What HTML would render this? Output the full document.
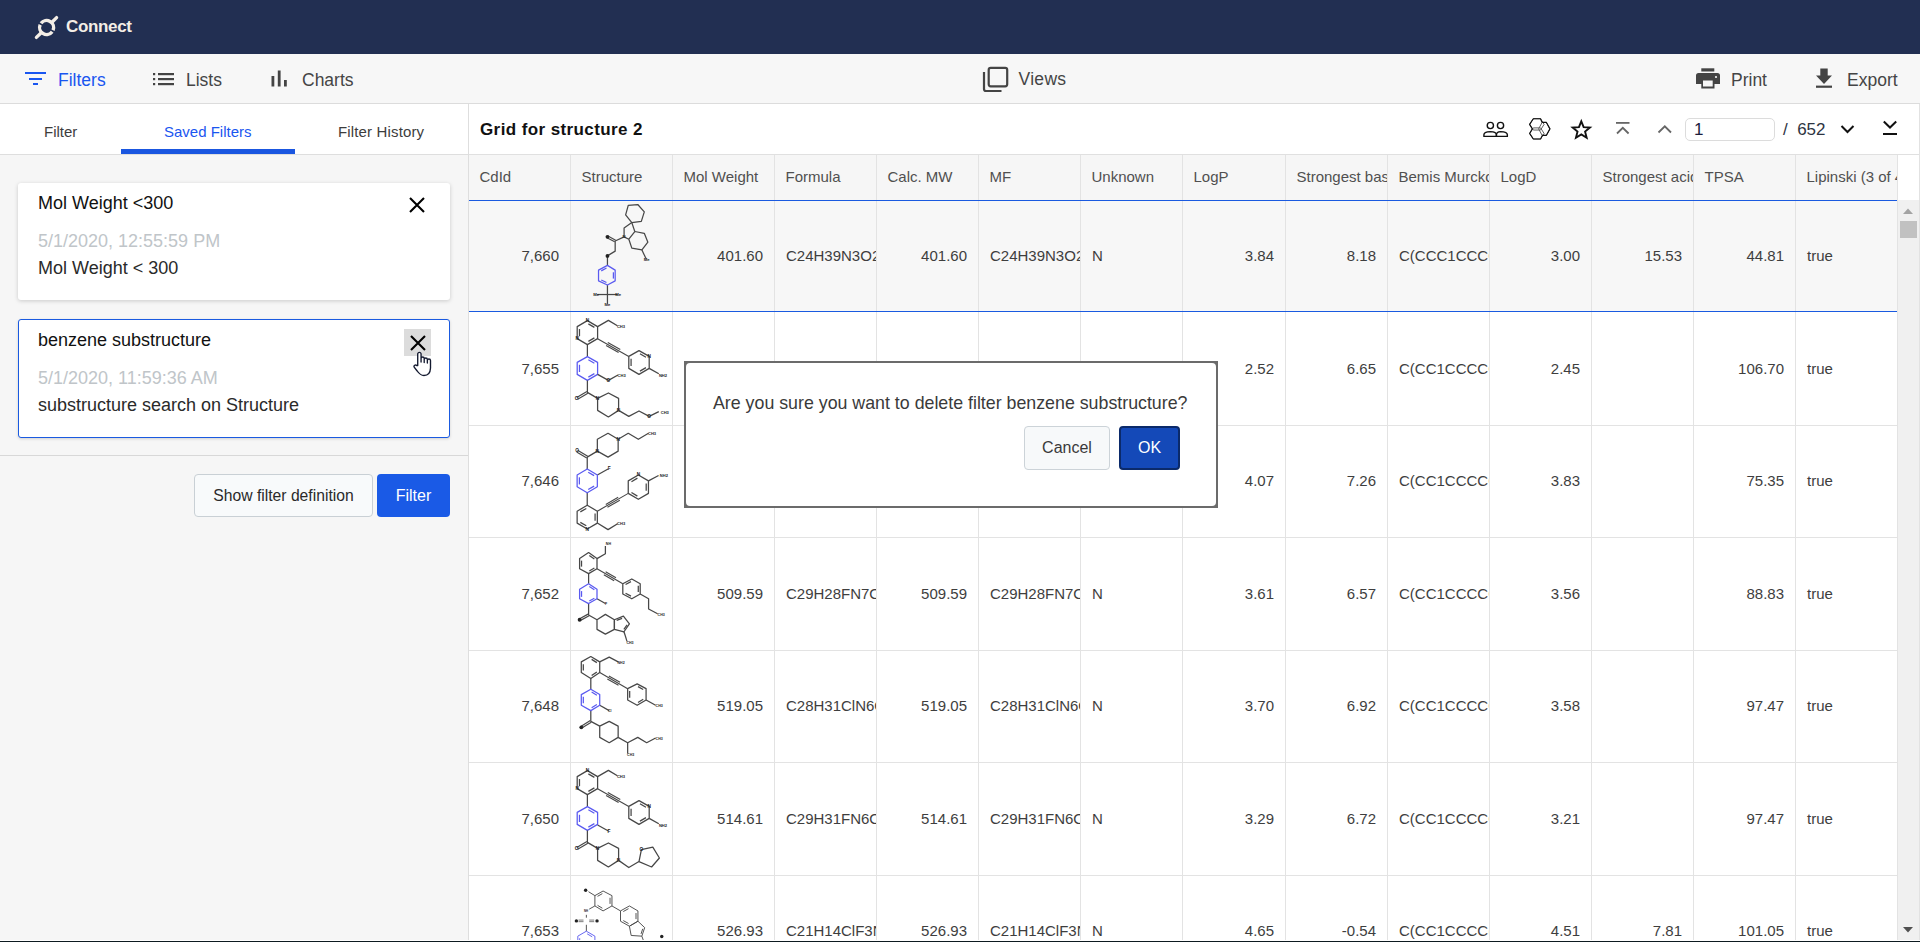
<!DOCTYPE html>
<html><head><meta charset="utf-8">
<style>
*{box-sizing:border-box;margin:0;padding:0}
html,body{width:1920px;height:942px;overflow:hidden;background:#fff;font-family:"Liberation Sans", sans-serif;color:#444}
.abs{position:absolute}
#hdr{position:absolute;left:0;top:0;width:1920px;height:54px;background:#222f52}
#tb{position:absolute;left:0;top:54px;width:1920px;height:50px;background:#f7f7f7;border-bottom:1px solid #dcdcdc}
.tbl{position:absolute;font-size:17.5px;line-height:20px;color:#454545;white-space:nowrap}
#left{position:absolute;left:0;top:104px;width:468px;height:838px;background:#f6f6f6}
#tabs{position:absolute;left:0;top:0;width:468px;height:51px;background:#fff;border-bottom:1px solid #dedede}
.tab{position:absolute;top:19px;font-size:15px;line-height:18px;color:#3d3d3d;white-space:nowrap}
.card{position:absolute;left:18px;width:431.5px;height:118px;background:#fff;border-radius:3px;box-shadow:0 1px 4px rgba(0,0,0,0.18)}
.ct{position:absolute;left:20px;font-size:18px;line-height:20px;color:#111;white-space:nowrap}
.cd{position:absolute;left:20px;font-size:18px;line-height:20px;color:#c0c5c9;white-space:nowrap}
.cs{position:absolute;left:20px;font-size:18px;line-height:20px;color:#2a2a2a;white-space:nowrap}
#vdiv{position:absolute;left:468px;top:104px;width:1px;height:838px;background:#dedede}
#gt{position:absolute;left:480px;top:119.5px;font-size:17px;font-weight:bold;line-height:20px;color:#111;letter-spacing:0.4px;white-space:nowrap}
#hrow{position:absolute;left:469px;top:154px;width:1428px;height:46px;background:#f6f6f6;border-top:1px solid #e0e0e0}
#hline{position:absolute;left:469px;top:154px;width:1451px;height:1px;background:#e0e0e0}
.hc{position:absolute;top:168px;width:102px;padding-left:10.5px;font-size:15px;line-height:18px;color:#505050;white-space:nowrap;overflow:hidden}
.c{position:absolute;width:101px;height:112px;font-size:15px;line-height:112px;color:#3e3e3e;white-space:nowrap;overflow:hidden}
.cr{text-align:right;padding-right:11px}
.cl{text-align:left;padding-left:11px}
.vl{position:absolute;top:155px;width:1px;height:787px;background:#e3e3e3}
.hl{position:absolute;left:469px;width:1428px;height:1px;background:#e3e3e3}
.mol{position:absolute}
#sel{position:absolute;left:469px;top:200px;width:1428px;height:112px;background:#f7f7f7}
.bl{position:absolute;left:469px;width:1428px;height:1px;background:#1a5ae0}
#sb{position:absolute;left:1898px;top:200px;width:22px;height:742px;background:#f0f0f0}
#dlg{position:absolute;left:684px;top:361px;width:534px;height:147px;background:#6b6b6b;padding:2px}
#dlgi{position:relative;width:100%;height:100%;background:#fff;border-radius:4px}
.btn{position:absolute;border-radius:4px;font-size:16px;text-align:center;white-space:nowrap}
</style></head><body>
<div id="hdr">
  <svg class="abs" style="left:33px;top:14px" width="28" height="28" viewBox="0 0 28 28">
    <path d="M19.19,17.71 A7.0,7.0 0 0 1 7.16,10.76 M8.01,9.29 A7.0,7.0 0 0 1 20.04,16.24" fill="none" stroke="#f4eee6" stroke-width="3.4"/>
    <line x1="19.2" y1="8" x2="23.6" y2="3.6" stroke="#f4eee6" stroke-width="3.3" stroke-linecap="round"/>
    <line x1="8" y1="19" x2="3.4" y2="23.4" stroke="#f4eee6" stroke-width="3.3" stroke-linecap="round"/>
  </svg>
  <div class="abs" style="left:66px;top:17px;font-size:17px;line-height:20px;font-weight:bold;letter-spacing:-0.35px;color:#f4eee6">Connect</div>
</div>
<div id="tb">
  <svg class="abs" style="left:25px;top:17px" width="22" height="16" viewBox="0 0 22 16"><rect x="0" y="1" width="21" height="2" fill="#1a56f0"/><rect x="4" y="7" width="13" height="2" fill="#1a56f0"/><rect x="8" y="12" width="5" height="2" fill="#1a56f0"/></svg>
  <div class="tbl" style="left:58px;top:16px;color:#1a56f0">Filters</div>
  <svg class="abs" style="left:153px;top:19px" width="22" height="13" viewBox="0 0 22 13"><rect x="0" y="0" width="2.2" height="2.2" fill="#444"/><rect x="0" y="5" width="2.2" height="2.2" fill="#444"/><rect x="0" y="10" width="2.2" height="2.2" fill="#444"/><rect x="5" y="0" width="16" height="2.2" fill="#444"/><rect x="5" y="5" width="16" height="2.2" fill="#444"/><rect x="5" y="10" width="16" height="2.2" fill="#444"/></svg>
  <div class="tbl" style="left:186px;top:16px">Lists</div>
  <svg class="abs" style="left:271px;top:16px" width="18" height="18" viewBox="0 0 18 18"><rect x="0.5" y="6" width="2.8" height="10.5" fill="#444"/><rect x="6.8" y="0.5" width="2.8" height="16" fill="#444"/><rect x="13" y="10" width="2.8" height="6.5" fill="#444"/></svg>
  <div class="tbl" style="left:302px;top:16px">Charts</div>
  <svg class="abs" style="left:982px;top:12px" width="27" height="27" viewBox="0 0 27 27"><path d="M2,6 V23 a2,2 0 0 0 2,2 H19.5" fill="none" stroke="#444" stroke-width="2.2"/><rect x="6.7" y="1.8" width="18.5" height="18.5" rx="2" fill="none" stroke="#444" stroke-width="2.2"/></svg>
  <div class="tbl" style="left:1018.5px;top:15px;letter-spacing:0.3px">Views</div>
  <svg class="abs" style="left:1696px;top:14px" width="24" height="22" viewBox="0 0 24 22"><rect x="5.3" y="0.3" width="13" height="3.2" fill="#444"/><path d="M2.5,5 H21.5 a2.5,2.5 0 0 1 2.5,2.5 V16 H18.5 V20.5 H5.3 V16 H0 V7.5 a2.5,2.5 0 0 1 2.5,-2.5 Z M7,12.5 V18.5 H16.7 V12.5 Z" fill="#444" fill-rule="evenodd"/><circle cx="20" cy="9" r="1.1" fill="#f7f7f7"/></svg>
  <div class="tbl" style="left:1731px;top:16px">Print</div>
  <svg class="abs" style="left:1815px;top:14px" width="18" height="21" viewBox="0 0 18 21"><path d="M5.3,0.5 H12.7 V7.5 H17 L9,16 L1,7.5 H5.3 Z" fill="#444"/><rect x="1" y="17.6" width="16" height="2.2" fill="#444"/></svg>
  <div class="tbl" style="left:1847px;top:16px">Export</div>
</div>
<div id="left">
  <div id="tabs">
    <div class="tab" style="left:44px">Filter</div>
    <div class="tab" style="left:164px;color:#1a56f0">Saved Filters</div>
    <div class="tab" style="left:338px;letter-spacing:0.15px">Filter History</div>
    <div class="abs" style="left:121px;top:45px;width:174px;height:5px;background:#1a56e0"></div>
  </div>
  <div class="card" style="top:79px;height:117px">
    <div class="ct" style="top:10px">Mol Weight &lt;300</div>
    <svg class="abs" style="left:391px;top:14px" width="16" height="16" viewBox="0 0 16 16"><path d="M1,1 L15,15 M15,1 L1,15" stroke="#000" stroke-width="2.1"/></svg>
    <div class="cd" style="top:48px">5/1/2020, 12:55:59 PM</div>
    <div class="cs" style="top:75px">Mol Weight &lt; 300</div>
  </div>
  <div class="card" style="top:215px;height:119px;border:1px solid #1a5ae0;box-shadow:0 1px 3px rgba(0,0,0,0.15)">
    <div class="ct" style="top:10px;left:19px">benzene substructure</div>
    <div class="abs" style="left:385px;top:9px;width:27px;height:27px;background:#dcdcdc"></div>
    <svg class="abs" style="left:391px;top:15px" width="16" height="16" viewBox="0 0 16 16"><path d="M1,1 L15,15 M15,1 L1,15" stroke="#000" stroke-width="2.1"/></svg>
    <div class="cd" style="top:48px;left:19px">5/1/2020, 11:59:36 AM</div>
    <div class="cs" style="top:75px;left:19px">substructure search on Structure</div>
  </div>
  <div class="abs" style="left:0;top:351px;width:468px;height:1px;background:#d8d8d8"></div>
  <div class="btn" style="left:194px;top:370px;width:179px;height:43px;background:#f8fafb;border:1px solid #c9d0d5;color:#2a2a2a;font-size:15.7px;line-height:41px">Show filter definition</div>
  <div class="btn" style="left:377px;top:370px;width:73px;height:43px;background:#1a5ae6;color:#fff;line-height:43px">Filter</div>
</div>
<div id="vdiv"></div>
<div id="gt">Grid for structure 2</div>
<div id="hrow"></div><div id="hline"></div>
<div id="sel"></div>
<svg class="mol" style="left:570px;top:200px" width="102" height="112" viewBox="0 0 858 942" preserveAspectRatio="none"><path d="M490,45 L570,38 L625,100 L600,180 L520,190 L468,125 Z" fill="none" stroke="#474747" stroke-width="10.5" stroke-linejoin="round"/><path d="M545,265 L625,280 L655,355 L605,420 L520,405 L495,330 Z" fill="none" stroke="#474747" stroke-width="10.5" stroke-linejoin="round"/><path d="M520,190 L455,235 L455,310" fill="none" stroke="#474747" stroke-width="10.5" stroke-linejoin="round"/><path d="M520,190 L545,265" fill="none" stroke="#474747" stroke-width="10.5" stroke-linejoin="round"/><path d="M495,330 L455,310" fill="none" stroke="#474747" stroke-width="10.5" stroke-linejoin="round"/><path d="M455,310 L380,345 L380,430 L315,470 L315,550" fill="none" stroke="#474747" stroke-width="10.5" stroke-linejoin="round"/><path d="M605,420 L640,495" fill="none" stroke="#474747" stroke-width="10.5" stroke-linejoin="round"/><path d="M315,715 L315,870" fill="none" stroke="#474747" stroke-width="10.5" stroke-linejoin="round"/><path d="M230,795 L400,795" fill="none" stroke="#474747" stroke-width="10.5" stroke-linejoin="round"/><line x1="384" y1="338" x2="319" y2="303" stroke="#474747" stroke-width="10"/><line x1="376" y1="352" x2="311" y2="317" stroke="#474747" stroke-width="10"/><path d="M315,550 L380,590 L380,680 L315,715 L240,680 L240,590 Z" fill="none" stroke="#5a5af0" stroke-width="10.5" stroke-linejoin="round"/><line x1="365" y1="608" x2="365" y2="661" stroke="#5a5af0" stroke-width="10.5"/><line x1="307" y1="694" x2="263" y2="673" stroke="#5a5af0" stroke-width="10.5"/><line x1="263" y1="596" x2="307" y2="572" stroke="#5a5af0" stroke-width="10.5"/><circle cx="315" cy="310" r="16" fill="#222"/><text x="455" y="312" font-size="36" font-weight="bold" fill="#222" font-family="Liberation Sans" text-anchor="middle" dominant-baseline="middle">N</text><circle cx="315" cy="470" r="16" fill="#222"/><text x="645" y="500" font-size="36" font-weight="bold" fill="#222" font-family="Liberation Sans" text-anchor="middle" dominant-baseline="middle">Me</text><text x="220" y="795" font-size="36" font-weight="bold" fill="#222" font-family="Liberation Sans" text-anchor="middle" dominant-baseline="middle">Me</text><text x="405" y="800" font-size="36" font-weight="bold" fill="#222" font-family="Liberation Sans" text-anchor="middle" dominant-baseline="middle">Me</text><text x="315" y="880" font-size="36" font-weight="bold" fill="#222" font-family="Liberation Sans" text-anchor="middle" dominant-baseline="middle">Me</text></svg><svg class="mol" style="left:570px;top:312px" width="102" height="113" viewBox="0 0 850 942" preserveAspectRatio="none"><path d="M145,72 L230,122 L230,222 L145,272 L60,222 L60,122 Z" fill="none" stroke="#474747" stroke-width="10.5" stroke-linejoin="round"/><line x1="153" y1="99" x2="203" y2="128" stroke="#474747" stroke-width="10.5"/><line x1="203" y1="216" x2="153" y2="245" stroke="#474747" stroke-width="10.5"/><line x1="79" y1="202" x2="79" y2="142" stroke="#474747" stroke-width="10.5"/><path d="M230,122 L320,70 L395,115" fill="none" stroke="#474747" stroke-width="10.5" stroke-linejoin="round"/><line x1="230" y1="222" x2="490" y2="370" stroke="#474747" stroke-width="9.5"/><line x1="301" y1="279" x2="405" y2="338" stroke="#474747" stroke-width="9.5"/><line x1="315" y1="254" x2="419" y2="313" stroke="#474747" stroke-width="9.5"/><path d="M490,370 L575,322 L660,370 L660,470 L575,520 L490,470 Z" fill="none" stroke="#474747" stroke-width="10.5" stroke-linejoin="round"/><line x1="583" y1="348" x2="633" y2="377" stroke="#474747" stroke-width="10.5"/><line x1="633" y1="464" x2="583" y2="493" stroke="#474747" stroke-width="10.5"/><line x1="509" y1="450" x2="509" y2="390" stroke="#474747" stroke-width="10.5"/><path d="M660,470 L740,515" fill="none" stroke="#474747" stroke-width="10.5" stroke-linejoin="round"/><path d="M145,272 L145,372" fill="none" stroke="#474747" stroke-width="10.5" stroke-linejoin="round"/><path d="M145,372 L230,420 L230,520 L145,570 L60,520 L60,420 Z" fill="none" stroke="#5a5af0" stroke-width="10.5" stroke-linejoin="round"/><line x1="153" y1="398" x2="203" y2="427" stroke="#5a5af0" stroke-width="10.5"/><line x1="203" y1="514" x2="153" y2="543" stroke="#5a5af0" stroke-width="10.5"/><line x1="79" y1="500" x2="79" y2="440" stroke="#5a5af0" stroke-width="10.5"/><path d="M145,570 L145,670 L230,720" fill="none" stroke="#474747" stroke-width="10.5" stroke-linejoin="round"/><line x1="141" y1="663" x2="56" y2="713" stroke="#474747" stroke-width="10"/><line x1="149" y1="677" x2="64" y2="727" stroke="#474747" stroke-width="10"/><path d="M230,720 L320,675 L405,720 L405,820 L320,875 L230,820 Z" fill="none" stroke="#474747" stroke-width="10.5" stroke-linejoin="round"/><text x="145" y="70" font-size="40" font-weight="bold" fill="#222" font-family="Liberation Sans" text-anchor="middle" dominant-baseline="middle">N</text><text x="60" y="220" font-size="40" font-weight="bold" fill="#222" font-family="Liberation Sans" text-anchor="middle" dominant-baseline="middle">N</text><text x="425" y="125" font-size="34" font-weight="bold" fill="#222" font-family="Liberation Sans" text-anchor="middle" dominant-baseline="middle">CH3</text><text x="660" y="372" font-size="40" font-weight="bold" fill="#222" font-family="Liberation Sans" text-anchor="middle" dominant-baseline="middle">N</text><text x="775" y="530" font-size="34" font-weight="bold" fill="#222" font-family="Liberation Sans" text-anchor="middle" dominant-baseline="middle">NH2</text><text x="55" y="725" font-size="40" font-weight="bold" fill="#222" font-family="Liberation Sans" text-anchor="middle" dominant-baseline="middle">O</text><text x="230" y="722" font-size="40" font-weight="bold" fill="#222" font-family="Liberation Sans" text-anchor="middle" dominant-baseline="middle">N</text><text x="405" y="822" font-size="40" font-weight="bold" fill="#222" font-family="Liberation Sans" text-anchor="middle" dominant-baseline="middle">N</text><path d="M230,520 L320,570 L400,525" fill="none" stroke="#474747" stroke-width="10.5" stroke-linejoin="round"/><path d="M405,820 L490,870 L575,825 L660,870 L740,830" fill="none" stroke="#474747" stroke-width="10.5" stroke-linejoin="round"/><text x="320" y="572" font-size="40" font-weight="bold" fill="#222" font-family="Liberation Sans" text-anchor="middle" dominant-baseline="middle">O</text><text x="430" y="530" font-size="34" font-weight="bold" fill="#222" font-family="Liberation Sans" text-anchor="middle" dominant-baseline="middle">CH3</text><text x="660" y="872" font-size="40" font-weight="bold" fill="#222" font-family="Liberation Sans" text-anchor="middle" dominant-baseline="middle">O</text><text x="790" y="840" font-size="34" font-weight="bold" fill="#222" font-family="Liberation Sans" text-anchor="middle" dominant-baseline="middle">CH3</text></svg><svg class="mol" style="left:570px;top:425px" width="102" height="112" viewBox="0 0 858 942" preserveAspectRatio="none"><path d="M230,220 L230,120 L320,70 L405,120 L405,220 L320,270 Z" fill="none" stroke="#474747" stroke-width="10.5" stroke-linejoin="round"/><path d="M405,120 L490,70 L575,120 L660,70" fill="none" stroke="#474747" stroke-width="10.5" stroke-linejoin="round"/><path d="M230,220 L145,270 L145,370" fill="none" stroke="#474747" stroke-width="10.5" stroke-linejoin="round"/><path d="M230,420 L320,370" fill="none" stroke="#474747" stroke-width="10.5" stroke-linejoin="round"/><path d="M145,570 L145,675" fill="none" stroke="#474747" stroke-width="10.5" stroke-linejoin="round"/><path d="M660,470 L745,425" fill="none" stroke="#474747" stroke-width="10.5" stroke-linejoin="round"/><path d="M230,825 L320,880 L400,830" fill="none" stroke="#474747" stroke-width="10.5" stroke-linejoin="round"/><line x1="149" y1="263" x2="64" y2="213" stroke="#474747" stroke-width="10"/><line x1="141" y1="277" x2="56" y2="227" stroke="#474747" stroke-width="10"/><path d="M145,370 L230,420 L230,520 L145,570 L60,520 L60,420 Z" fill="none" stroke="#5a5af0" stroke-width="10.5" stroke-linejoin="round"/><line x1="153" y1="397" x2="203" y2="426" stroke="#5a5af0" stroke-width="10.5"/><line x1="203" y1="514" x2="153" y2="543" stroke="#5a5af0" stroke-width="10.5"/><line x1="79" y1="500" x2="79" y2="440" stroke="#5a5af0" stroke-width="10.5"/><path d="M145,675 L230,725 L230,825 L145,875 L60,825 L60,725 Z" fill="none" stroke="#474747" stroke-width="10.5" stroke-linejoin="round"/><line x1="211" y1="745" x2="211" y2="805" stroke="#474747" stroke-width="10.5"/><line x1="137" y1="848" x2="87" y2="819" stroke="#474747" stroke-width="10.5"/><line x1="87" y1="731" x2="137" y2="702" stroke="#474747" stroke-width="10.5"/><line x1="230" y1="725" x2="490" y2="575" stroke="#474747" stroke-width="9.5"/><line x1="315" y1="692" x2="419" y2="632" stroke="#474747" stroke-width="9.5"/><line x1="301" y1="668" x2="405" y2="608" stroke="#474747" stroke-width="9.5"/><path d="M490,575 L490,470 L575,420 L660,470 L660,575 L575,625 Z" fill="none" stroke="#474747" stroke-width="10.5" stroke-linejoin="round"/><line x1="517" y1="477" x2="567" y2="447" stroke="#474747" stroke-width="10.5"/><line x1="641" y1="491" x2="641" y2="554" stroke="#474747" stroke-width="10.5"/><line x1="567" y1="598" x2="517" y2="568" stroke="#474747" stroke-width="10.5"/><text x="690" y="72" font-size="34" font-weight="bold" fill="#222" font-family="Liberation Sans" text-anchor="middle" dominant-baseline="middle">CH3</text><text x="60" y="218" font-size="40" font-weight="bold" fill="#222" font-family="Liberation Sans" text-anchor="middle" dominant-baseline="middle">O</text><text x="330" y="370" font-size="40" font-weight="bold" fill="#222" font-family="Liberation Sans" text-anchor="middle" dominant-baseline="middle">F</text><text x="790" y="430" font-size="34" font-weight="bold" fill="#222" font-family="Liberation Sans" text-anchor="middle" dominant-baseline="middle">NH2</text><text x="430" y="835" font-size="34" font-weight="bold" fill="#222" font-family="Liberation Sans" text-anchor="middle" dominant-baseline="middle">CH3</text><text x="145" y="877" font-size="40" font-weight="bold" fill="#222" font-family="Liberation Sans" text-anchor="middle" dominant-baseline="middle">N</text><text x="575" y="420" font-size="40" font-weight="bold" fill="#222" font-family="Liberation Sans" text-anchor="middle" dominant-baseline="middle">N</text><text x="230" y="222" font-size="40" font-weight="bold" fill="#222" font-family="Liberation Sans" text-anchor="middle" dominant-baseline="middle">N</text><text x="405" y="122" font-size="40" font-weight="bold" fill="#222" font-family="Liberation Sans" text-anchor="middle" dominant-baseline="middle">N</text></svg><svg class="mol" style="left:570px;top:537px" width="102" height="113" viewBox="0 0 850 942" preserveAspectRatio="none"><path d="M155,130 L225,180 L225,265 L155,305 L80,265 L80,180 Z" fill="none" stroke="#474747" stroke-width="10.5" stroke-linejoin="round"/><line x1="161" y1="155" x2="203" y2="184" stroke="#474747" stroke-width="10.5"/><line x1="203" y1="259" x2="161" y2="283" stroke="#474747" stroke-width="10.5"/><line x1="96" y1="247" x2="96" y2="197" stroke="#474747" stroke-width="10.5"/><path d="M225,180 L295,140 L295,75" fill="none" stroke="#474747" stroke-width="10.5" stroke-linejoin="round"/><path d="M585,475 L655,515 L655,600 L730,640" fill="none" stroke="#474747" stroke-width="10.5" stroke-linejoin="round"/><path d="M155,305 L155,390" fill="none" stroke="#474747" stroke-width="10.5" stroke-linejoin="round"/><path d="M225,515 L295,555" fill="none" stroke="#474747" stroke-width="10.5" stroke-linejoin="round"/><path d="M155,555 L155,650 L225,690" fill="none" stroke="#474747" stroke-width="10.5" stroke-linejoin="round"/><path d="M450,790 L475,870" fill="none" stroke="#474747" stroke-width="10.5" stroke-linejoin="round"/><line x1="225" y1="265" x2="440" y2="390" stroke="#474747" stroke-width="9.5"/><line x1="282" y1="315" x2="368" y2="365" stroke="#474747" stroke-width="9.5"/><line x1="297" y1="290" x2="383" y2="340" stroke="#474747" stroke-width="9.5"/><path d="M440,390 L515,350 L585,390 L585,475 L515,515 L440,475 Z" fill="none" stroke="#474747" stroke-width="10.5" stroke-linejoin="round"/><line x1="463" y1="396" x2="508" y2="372" stroke="#474747" stroke-width="10.5"/><line x1="569" y1="407" x2="569" y2="458" stroke="#474747" stroke-width="10.5"/><line x1="508" y1="493" x2="463" y2="469" stroke="#474747" stroke-width="10.5"/><path d="M155,390 L225,435 L225,515 L155,555 L80,515 L80,435 Z" fill="none" stroke="#5a5af0" stroke-width="10.5" stroke-linejoin="round"/><line x1="161" y1="413" x2="203" y2="439" stroke="#5a5af0" stroke-width="10.5"/><line x1="203" y1="510" x2="161" y2="533" stroke="#5a5af0" stroke-width="10.5"/><line x1="96" y1="499" x2="96" y2="451" stroke="#5a5af0" stroke-width="10.5"/><line x1="151" y1="643" x2="76" y2="683" stroke="#474747" stroke-width="10"/><line x1="159" y1="657" x2="84" y2="697" stroke="#474747" stroke-width="10"/><path d="M225,690 L295,645 L370,690 L370,770 L295,810 L225,770 Z" fill="none" stroke="#474747" stroke-width="10.5" stroke-linejoin="round"/><path d="M370,690 L445,660 L495,725 L450,790 L370,770 Z" fill="none" stroke="#474747" stroke-width="10.5" stroke-linejoin="round"/><line x1="389" y1="695" x2="434" y2="678" stroke="#474747" stroke-width="10.5"/><line x1="476" y1="732" x2="449" y2="770" stroke="#474747" stroke-width="10.5"/><text x="320" y="62" font-size="30" font-weight="bold" fill="#222" font-family="Liberation Sans" text-anchor="middle" dominant-baseline="middle">NH</text><text x="760" y="650" font-size="30" font-weight="bold" fill="#222" font-family="Liberation Sans" text-anchor="middle" dominant-baseline="middle">CH3</text><circle cx="80" cy="690" r="16" fill="#222"/><text x="300" y="558" font-size="30" font-weight="bold" fill="#222" font-family="Liberation Sans" text-anchor="middle" dominant-baseline="middle">F</text><text x="500" y="880" font-size="30" font-weight="bold" fill="#222" font-family="Liberation Sans" text-anchor="middle" dominant-baseline="middle">CH3</text></svg><svg class="mol" style="left:570px;top:650px" width="102" height="112" viewBox="0 0 858 942" preserveAspectRatio="none"><path d="M175,55 L250,100 L250,190 L175,240 L95,190 L95,100 Z" fill="none" stroke="#474747" stroke-width="10.5" stroke-linejoin="round"/><line x1="182" y1="79" x2="226" y2="106" stroke="#474747" stroke-width="10.5"/><line x1="226" y1="185" x2="182" y2="215" stroke="#474747" stroke-width="10.5"/><line x1="112" y1="172" x2="112" y2="119" stroke="#474747" stroke-width="10.5"/><path d="M250,100 L330,60 L405,100" fill="none" stroke="#474747" stroke-width="10.5" stroke-linejoin="round"/><path d="M640,420 L720,465" fill="none" stroke="#474747" stroke-width="10.5" stroke-linejoin="round"/><path d="M175,240 L175,330" fill="none" stroke="#474747" stroke-width="10.5" stroke-linejoin="round"/><path d="M250,465 L330,510" fill="none" stroke="#474747" stroke-width="10.5" stroke-linejoin="round"/><path d="M175,510 L175,600 L250,640" fill="none" stroke="#474747" stroke-width="10.5" stroke-linejoin="round"/><path d="M405,735 L485,780 L570,735 L645,780 L720,740" fill="none" stroke="#474747" stroke-width="10.5" stroke-linejoin="round"/><path d="M485,780 L485,870" fill="none" stroke="#474747" stroke-width="10.5" stroke-linejoin="round"/><line x1="250" y1="190" x2="485" y2="325" stroke="#474747" stroke-width="9.5"/><line x1="314" y1="243" x2="408" y2="297" stroke="#474747" stroke-width="9.5"/><line x1="327" y1="218" x2="421" y2="272" stroke="#474747" stroke-width="9.5"/><path d="M485,325 L565,285 L640,325 L640,420 L565,465 L485,420 Z" fill="none" stroke="#474747" stroke-width="10.5" stroke-linejoin="round"/><line x1="572" y1="308" x2="616" y2="332" stroke="#474747" stroke-width="10.5"/><line x1="616" y1="414" x2="572" y2="441" stroke="#474747" stroke-width="10.5"/><line x1="502" y1="401" x2="502" y2="345" stroke="#474747" stroke-width="10.5"/><path d="M175,330 L250,375 L250,465 L175,510 L95,465 L95,375 Z" fill="none" stroke="#5a5af0" stroke-width="10.5" stroke-linejoin="round"/><line x1="182" y1="354" x2="226" y2="381" stroke="#5a5af0" stroke-width="10.5"/><line x1="226" y1="459" x2="182" y2="486" stroke="#5a5af0" stroke-width="10.5"/><line x1="112" y1="447" x2="112" y2="393" stroke="#5a5af0" stroke-width="10.5"/><line x1="171" y1="593" x2="91" y2="643" stroke="#474747" stroke-width="10"/><line x1="179" y1="607" x2="99" y2="657" stroke="#474747" stroke-width="10"/><path d="M250,640 L330,600 L405,640 L405,735 L330,780 L250,735 Z" fill="none" stroke="#474747" stroke-width="10.5" stroke-linejoin="round"/><text x="430" y="110" font-size="30" font-weight="bold" fill="#222" font-family="Liberation Sans" text-anchor="middle" dominant-baseline="middle">NH2</text><text x="750" y="472" font-size="30" font-weight="bold" fill="#222" font-family="Liberation Sans" text-anchor="middle" dominant-baseline="middle">CH3</text><text x="335" y="512" font-size="30" font-weight="bold" fill="#222" font-family="Liberation Sans" text-anchor="middle" dominant-baseline="middle">Cl</text><circle cx="95" cy="650" r="16" fill="#222"/><text x="750" y="745" font-size="30" font-weight="bold" fill="#222" font-family="Liberation Sans" text-anchor="middle" dominant-baseline="middle">CH3</text><text x="510" y="880" font-size="30" font-weight="bold" fill="#222" font-family="Liberation Sans" text-anchor="middle" dominant-baseline="middle">CH3</text></svg><svg class="mol" style="left:570px;top:762px" width="102" height="113" viewBox="0 0 850 942" preserveAspectRatio="none"><path d="M145,72 L230,122 L230,222 L145,272 L60,222 L60,122 Z" fill="none" stroke="#474747" stroke-width="10.5" stroke-linejoin="round"/><line x1="153" y1="99" x2="203" y2="128" stroke="#474747" stroke-width="10.5"/><line x1="203" y1="216" x2="153" y2="245" stroke="#474747" stroke-width="10.5"/><line x1="79" y1="202" x2="79" y2="142" stroke="#474747" stroke-width="10.5"/><path d="M230,122 L320,70 L395,115" fill="none" stroke="#474747" stroke-width="10.5" stroke-linejoin="round"/><line x1="230" y1="222" x2="490" y2="370" stroke="#474747" stroke-width="9.5"/><line x1="301" y1="279" x2="405" y2="338" stroke="#474747" stroke-width="9.5"/><line x1="315" y1="254" x2="419" y2="313" stroke="#474747" stroke-width="9.5"/><path d="M490,370 L575,322 L660,370 L660,470 L575,520 L490,470 Z" fill="none" stroke="#474747" stroke-width="10.5" stroke-linejoin="round"/><line x1="583" y1="348" x2="633" y2="377" stroke="#474747" stroke-width="10.5"/><line x1="633" y1="464" x2="583" y2="493" stroke="#474747" stroke-width="10.5"/><line x1="509" y1="450" x2="509" y2="390" stroke="#474747" stroke-width="10.5"/><path d="M660,470 L740,515" fill="none" stroke="#474747" stroke-width="10.5" stroke-linejoin="round"/><path d="M145,272 L145,372" fill="none" stroke="#474747" stroke-width="10.5" stroke-linejoin="round"/><path d="M145,372 L230,420 L230,520 L145,570 L60,520 L60,420 Z" fill="none" stroke="#5a5af0" stroke-width="10.5" stroke-linejoin="round"/><line x1="153" y1="398" x2="203" y2="427" stroke="#5a5af0" stroke-width="10.5"/><line x1="203" y1="514" x2="153" y2="543" stroke="#5a5af0" stroke-width="10.5"/><line x1="79" y1="500" x2="79" y2="440" stroke="#5a5af0" stroke-width="10.5"/><path d="M145,570 L145,670 L230,720" fill="none" stroke="#474747" stroke-width="10.5" stroke-linejoin="round"/><line x1="141" y1="663" x2="56" y2="713" stroke="#474747" stroke-width="10"/><line x1="149" y1="677" x2="64" y2="727" stroke="#474747" stroke-width="10"/><path d="M230,720 L320,675 L405,720 L405,820 L320,875 L230,820 Z" fill="none" stroke="#474747" stroke-width="10.5" stroke-linejoin="round"/><text x="145" y="70" font-size="40" font-weight="bold" fill="#222" font-family="Liberation Sans" text-anchor="middle" dominant-baseline="middle">N</text><text x="60" y="220" font-size="40" font-weight="bold" fill="#222" font-family="Liberation Sans" text-anchor="middle" dominant-baseline="middle">N</text><text x="425" y="125" font-size="34" font-weight="bold" fill="#222" font-family="Liberation Sans" text-anchor="middle" dominant-baseline="middle">CH3</text><text x="660" y="372" font-size="40" font-weight="bold" fill="#222" font-family="Liberation Sans" text-anchor="middle" dominant-baseline="middle">N</text><text x="775" y="530" font-size="34" font-weight="bold" fill="#222" font-family="Liberation Sans" text-anchor="middle" dominant-baseline="middle">NH2</text><text x="55" y="725" font-size="40" font-weight="bold" fill="#222" font-family="Liberation Sans" text-anchor="middle" dominant-baseline="middle">O</text><text x="230" y="722" font-size="40" font-weight="bold" fill="#222" font-family="Liberation Sans" text-anchor="middle" dominant-baseline="middle">N</text><text x="405" y="822" font-size="40" font-weight="bold" fill="#222" font-family="Liberation Sans" text-anchor="middle" dominant-baseline="middle">N</text><path d="M230,525 L320,575" fill="none" stroke="#474747" stroke-width="10.5" stroke-linejoin="round"/><path d="M405,820 L490,880 L575,830" fill="none" stroke="#474747" stroke-width="10.5" stroke-linejoin="round"/><path d="M575,830 L595,730 L690,710 L745,800 L680,875 Z" fill="none" stroke="#474747" stroke-width="10.5" stroke-linejoin="round"/><text x="325" y="578" font-size="40" font-weight="bold" fill="#222" font-family="Liberation Sans" text-anchor="middle" dominant-baseline="middle">F</text><text x="595" y="730" font-size="40" font-weight="bold" fill="#222" font-family="Liberation Sans" text-anchor="middle" dominant-baseline="middle">O</text></svg><svg class="mol" style="left:570px;top:875px" width="102" height="67" viewBox="0 0 1434 942" preserveAspectRatio="none"><path d="M350,290 L465,225 L590,290 L590,435 L465,505 L350,435 Z" fill="none" stroke="#474747" stroke-width="13" stroke-linejoin="round"/><line x1="387" y1="300" x2="455" y2="262" stroke="#474747" stroke-width="13"/><line x1="563" y1="320" x2="563" y2="406" stroke="#474747" stroke-width="13"/><line x1="455" y1="467" x2="387" y2="426" stroke="#474747" stroke-width="13"/><path d="M350,290 L260,235" fill="none" stroke="#474747" stroke-width="13" stroke-linejoin="round"/><path d="M350,435 L270,480" fill="none" stroke="#474747" stroke-width="13" stroke-linejoin="round"/><path d="M230,560 L230,600" fill="none" stroke="#474747" stroke-width="13" stroke-linejoin="round"/><path d="M230,700 L230,790" fill="none" stroke="#474747" stroke-width="13" stroke-linejoin="round"/><path d="M590,435 L710,505" fill="none" stroke="#474747" stroke-width="13" stroke-linejoin="round"/><path d="M1010,860 L1040,942" fill="none" stroke="#474747" stroke-width="13" stroke-linejoin="round"/><line x1="120" y1="656" x2="190" y2="656" stroke="#474747" stroke-width="10"/><line x1="120" y1="634" x2="190" y2="634" stroke="#474747" stroke-width="10"/><line x1="270" y1="656" x2="340" y2="656" stroke="#474747" stroke-width="10"/><line x1="270" y1="634" x2="340" y2="634" stroke="#474747" stroke-width="10"/><path d="M230,790 L350,860 L350,1000 L230,1070 L110,1000 L110,860 Z" fill="none" stroke="#5a5af0" stroke-width="13" stroke-linejoin="round"/><line x1="241" y1="827" x2="312" y2="869" stroke="#5a5af0" stroke-width="13"/><line x1="312" y1="991" x2="241" y2="1033" stroke="#5a5af0" stroke-width="13"/><line x1="136" y1="971" x2="136" y2="889" stroke="#5a5af0" stroke-width="13"/><path d="M710,505 L835,435 L955,505 L955,650 L835,720 L710,650 Z" fill="none" stroke="#474747" stroke-width="13" stroke-linejoin="round"/><line x1="749" y1="514" x2="823" y2="473" stroke="#474747" stroke-width="13"/><line x1="928" y1="535" x2="928" y2="620" stroke="#474747" stroke-width="13"/><line x1="823" y1="682" x2="749" y2="641" stroke="#474747" stroke-width="13"/><path d="M955,650 L1050,740 L1010,860 L860,850 L835,720 Z" fill="none" stroke="#474747" stroke-width="13" stroke-linejoin="round"/><line x1="1022" y1="757" x2="999" y2="828" stroke="#474747" stroke-width="13"/><circle cx="220" cy="215" r="24" fill="#222"/><text x="225" y="505" font-size="40" font-weight="bold" fill="#222" font-family="Liberation Sans" text-anchor="middle" dominant-baseline="middle">NH</text><circle cx="90" cy="645" r="24" fill="#222"/><circle cx="380" cy="645" r="24" fill="#222"/><circle cx="1290" cy="865" r="24" fill="#222"/></svg>
<div class="vl" style="left:570px"></div><div class="vl" style="left:672px"></div><div class="vl" style="left:774px"></div><div class="vl" style="left:876px"></div><div class="vl" style="left:978px"></div><div class="vl" style="left:1080px"></div><div class="vl" style="left:1182px"></div><div class="vl" style="left:1285px"></div><div class="vl" style="left:1387px"></div><div class="vl" style="left:1489px"></div><div class="vl" style="left:1591px"></div><div class="vl" style="left:1693px"></div><div class="vl" style="left:1795px"></div><div class="vl" style="left:1897px"></div><div class="hl" style="top:425px"></div><div class="hl" style="top:537px"></div><div class="hl" style="top:650px"></div><div class="hl" style="top:762px"></div><div class="hl" style="top:875px"></div><div class="hl" style="top:987px"></div>
<div class="bl" style="top:200px"></div><div class="bl" style="top:311px"></div>
<div class="hc" style="left:469px;width:101px">CdId</div><div class="hc" style="left:571px;width:101px">Structure</div><div class="hc" style="left:673px;width:101px">Mol Weight</div><div class="hc" style="left:775px;width:101px">Formula</div><div class="hc" style="left:877px;width:101px">Calc. MW</div><div class="hc" style="left:979px;width:101px">MF</div><div class="hc" style="left:1081px;width:101px">Unknown</div><div class="hc" style="left:1183px;width:102px">LogP</div><div class="hc" style="left:1286px;width:101px">Strongest basic</div><div class="hc" style="left:1388px;width:101px">Bemis Murcko</div><div class="hc" style="left:1490px;width:101px">LogD</div><div class="hc" style="left:1592px;width:101px">Strongest acidic</div><div class="hc" style="left:1694px;width:101px">TPSA</div><div class="hc" style="left:1796px;width:101px">Lipinski (3 of 4)</div>
<div class="c cr" style="left:469px;width:101px;top:200.0px">7,660</div><div class="c cr" style="left:673px;width:101px;top:200.0px">401.60</div><div class="c cl" style="left:775px;width:101px;top:200.0px">C24H39N3O2</div><div class="c cr" style="left:877px;width:101px;top:200.0px">401.60</div><div class="c cl" style="left:979px;width:101px;top:200.0px">C24H39N3O2</div><div class="c cl" style="left:1081px;width:101px;top:200.0px">N</div><div class="c cr" style="left:1183px;width:102px;top:200.0px">3.84</div><div class="c cr" style="left:1286px;width:101px;top:200.0px">8.18</div><div class="c cl" style="left:1388px;width:101px;top:200.0px">C(CCC1CCCC</div><div class="c cr" style="left:1490px;width:101px;top:200.0px">3.00</div><div class="c cr" style="left:1592px;width:101px;top:200.0px">15.53</div><div class="c cr" style="left:1694px;width:101px;top:200.0px">44.81</div><div class="c cl" style="left:1796px;width:101px;top:200.0px">true</div><div class="c cr" style="left:469px;width:101px;top:312.5px">7,655</div><div class="c cr" style="left:1183px;width:102px;top:312.5px">2.52</div><div class="c cr" style="left:1286px;width:101px;top:312.5px">6.65</div><div class="c cl" style="left:1388px;width:101px;top:312.5px">C(CC1CCCCC</div><div class="c cr" style="left:1490px;width:101px;top:312.5px">2.45</div><div class="c cr" style="left:1694px;width:101px;top:312.5px">106.70</div><div class="c cl" style="left:1796px;width:101px;top:312.5px">true</div><div class="c cr" style="left:469px;width:101px;top:425.0px">7,646</div><div class="c cr" style="left:1183px;width:102px;top:425.0px">4.07</div><div class="c cr" style="left:1286px;width:101px;top:425.0px">7.26</div><div class="c cl" style="left:1388px;width:101px;top:425.0px">C(CC1CCCCC</div><div class="c cr" style="left:1490px;width:101px;top:425.0px">3.83</div><div class="c cr" style="left:1694px;width:101px;top:425.0px">75.35</div><div class="c cl" style="left:1796px;width:101px;top:425.0px">true</div><div class="c cr" style="left:469px;width:101px;top:537.5px">7,652</div><div class="c cr" style="left:673px;width:101px;top:537.5px">509.59</div><div class="c cl" style="left:775px;width:101px;top:537.5px">C29H28FN7O</div><div class="c cr" style="left:877px;width:101px;top:537.5px">509.59</div><div class="c cl" style="left:979px;width:101px;top:537.5px">C29H28FN7O</div><div class="c cl" style="left:1081px;width:101px;top:537.5px">N</div><div class="c cr" style="left:1183px;width:102px;top:537.5px">3.61</div><div class="c cr" style="left:1286px;width:101px;top:537.5px">6.57</div><div class="c cl" style="left:1388px;width:101px;top:537.5px">C(CC1CCCCC</div><div class="c cr" style="left:1490px;width:101px;top:537.5px">3.56</div><div class="c cr" style="left:1694px;width:101px;top:537.5px">88.83</div><div class="c cl" style="left:1796px;width:101px;top:537.5px">true</div><div class="c cr" style="left:469px;width:101px;top:650.0px">7,648</div><div class="c cr" style="left:673px;width:101px;top:650.0px">519.05</div><div class="c cl" style="left:775px;width:101px;top:650.0px">C28H31ClN6O</div><div class="c cr" style="left:877px;width:101px;top:650.0px">519.05</div><div class="c cl" style="left:979px;width:101px;top:650.0px">C28H31ClN6O</div><div class="c cl" style="left:1081px;width:101px;top:650.0px">N</div><div class="c cr" style="left:1183px;width:102px;top:650.0px">3.70</div><div class="c cr" style="left:1286px;width:101px;top:650.0px">6.92</div><div class="c cl" style="left:1388px;width:101px;top:650.0px">C(CC1CCCCC</div><div class="c cr" style="left:1490px;width:101px;top:650.0px">3.58</div><div class="c cr" style="left:1694px;width:101px;top:650.0px">97.47</div><div class="c cl" style="left:1796px;width:101px;top:650.0px">true</div><div class="c cr" style="left:469px;width:101px;top:762.5px">7,650</div><div class="c cr" style="left:673px;width:101px;top:762.5px">514.61</div><div class="c cl" style="left:775px;width:101px;top:762.5px">C29H31FN6O</div><div class="c cr" style="left:877px;width:101px;top:762.5px">514.61</div><div class="c cl" style="left:979px;width:101px;top:762.5px">C29H31FN6O</div><div class="c cl" style="left:1081px;width:101px;top:762.5px">N</div><div class="c cr" style="left:1183px;width:102px;top:762.5px">3.29</div><div class="c cr" style="left:1286px;width:101px;top:762.5px">6.72</div><div class="c cl" style="left:1388px;width:101px;top:762.5px">C(CC1CCCCC</div><div class="c cr" style="left:1490px;width:101px;top:762.5px">3.21</div><div class="c cr" style="left:1694px;width:101px;top:762.5px">97.47</div><div class="c cl" style="left:1796px;width:101px;top:762.5px">true</div><div class="c cr" style="left:469px;width:101px;top:875.0px">7,653</div><div class="c cr" style="left:673px;width:101px;top:875.0px">526.93</div><div class="c cl" style="left:775px;width:101px;top:875.0px">C21H14ClF3N</div><div class="c cr" style="left:877px;width:101px;top:875.0px">526.93</div><div class="c cl" style="left:979px;width:101px;top:875.0px">C21H14ClF3N</div><div class="c cl" style="left:1081px;width:101px;top:875.0px">N</div><div class="c cr" style="left:1183px;width:102px;top:875.0px">4.65</div><div class="c cr" style="left:1286px;width:101px;top:875.0px">-0.54</div><div class="c cl" style="left:1388px;width:101px;top:875.0px">C(CC1CCCC((</div><div class="c cr" style="left:1490px;width:101px;top:875.0px">4.51</div><div class="c cr" style="left:1592px;width:101px;top:875.0px">7.81</div><div class="c cr" style="left:1694px;width:101px;top:875.0px">101.05</div><div class="c cl" style="left:1796px;width:101px;top:875.0px">true</div>
<div id="sb">
  <svg class="abs" style="left:5px;top:8px" width="10" height="6" viewBox="0 0 10 6"><path d="M0,6 L5,0.5 L10,6 Z" fill="#a3a3a3"/></svg>
  <div class="abs" style="left:2px;top:21px;width:17px;height:17px;background:#c1c1c1"></div>
  <svg class="abs" style="left:5px;top:727px" width="10" height="6" viewBox="0 0 10 6"><path d="M0,0 L5,5.5 L10,0 Z" fill="#505050"/></svg>
</div>
<!-- grid toolbar icons -->
<svg class="abs" style="left:1480px;top:115px" width="75" height="27" viewBox="0 0 1920 691"><circle cx="265" cy="268" r="80" fill="none" stroke="#111" stroke-width="36"/><circle cx="525" cy="268" r="80" fill="none" stroke="#111" stroke-width="36"/><path d="M100,548 V505 Q100,428 265,425 Q420,428 420,505 V548 Z" fill="none" stroke="#111" stroke-width="36" stroke-linejoin="round"/><path d="M420,548 V505 Q425,428 525,425 Q700,428 700,505 V548 Z" fill="none" stroke="#111" stroke-width="36" stroke-linejoin="round"/><path d="M1365,95 L1550,95 L1640,240 L1550,385 L1365,385 L1270,240 Z" fill="none" stroke="#555" stroke-width="24" stroke-linejoin="round"/><path d="M1365,330 L1550,330 L1640,472 L1550,615 L1365,615 L1270,472 Z" fill="none" stroke="#555" stroke-width="24" stroke-linejoin="round"/><path d="M1590,190 L1700,190 L1790,355 L1700,520 L1590,520 L1500,355 Z" fill="none" stroke="#555" stroke-width="24" stroke-linejoin="round"/><path d="M1590,190 L1550,95 L1365,95 L1270,240 L1340,355 L1270,472 L1365,615 L1550,615 L1600,520" fill="none" stroke="#111" stroke-width="30" stroke-linejoin="round"/><path d="M1590,190 L1700,190 L1790,355 L1700,520 L1590,520" fill="none" stroke="#111" stroke-width="30" stroke-linejoin="round"/></svg>
<svg class="abs" style="left:1560px;top:110px" width="44" height="40" viewBox="0 0 44 40"><path d="M21.30,11.30 L23.65,17.16 L29.95,17.59 L25.10,21.64 L26.65,27.76 L21.30,24.40 L15.95,27.76 L17.50,21.64 L12.65,17.59 L18.95,17.16 Z" fill="none" stroke="#111" stroke-width="1.9" stroke-linejoin="miter"/></svg>
<svg class="abs" style="left:1615px;top:121px" width="16" height="16" viewBox="0 0 16 16"><rect x="1" y="1" width="13.5" height="1.8" fill="#666"/><path d="M2,12.5 L7.8,6.8 L13.6,12.5" fill="none" stroke="#666" stroke-width="1.8"/></svg>
<svg class="abs" style="left:1657px;top:124px" width="16" height="10" viewBox="0 0 16 10"><path d="M1.5,8.5 L7.8,2.3 L14,8.5" fill="none" stroke="#666" stroke-width="1.8"/></svg>
<div class="abs" style="left:1685px;top:118px;width:90px;height:23px;border:1px solid #dcdcdc;border-radius:5px;background:#fff"></div>
<div class="abs" style="left:1694px;top:120px;font-size:17px;line-height:20px;color:#1c1c3c">1</div>
<div class="abs" style="left:1783px;top:120px;font-size:17px;line-height:20px;color:#2e3442;white-space:nowrap">/&nbsp; 652</div>
<svg class="abs" style="left:1840px;top:124px" width="15" height="11" viewBox="0 0 15 11"><path d="M1.5,2 L7.5,8 L13.5,2" fill="none" stroke="#111" stroke-width="2"/></svg>
<svg class="abs" style="left:1882px;top:120px" width="16" height="17" viewBox="0 0 16 17"><path d="M1.8,1.5 L8,7.5 L14.2,1.5" fill="none" stroke="#111" stroke-width="2"/><rect x="1" y="13" width="14" height="2" fill="#111"/></svg>
<!-- dialog -->
<div id="dlg"><div id="dlgi">
  <div class="abs" style="left:27px;top:30px;font-size:17.8px;line-height:20px;color:#3a3a3a;white-space:nowrap">Are you sure you want to delete filter benzene substructure?</div>
  <div class="btn" style="left:338px;top:63px;width:86px;height:44px;background:#f7f9fa;border:1px solid #ccd3d8;color:#3a3a3a;line-height:42px">Cancel</div>
  <div class="btn" style="left:433px;top:63px;width:61px;height:44px;background:#1449b8;border:2px solid #0b2a6a;color:#fff;line-height:40px">OK</div>
</div></div>
<div class="abs" style="left:0;top:940px;width:1920px;height:1px;background:#fff"></div>
<div class="abs" style="left:0;top:941px;width:1920px;height:1px;background:#0d1a20"></div>
<div class="abs" style="left:1919px;top:104px;width:1px;height:836px;background:#e2e2e2"></div>
<!-- cursor -->
<svg class="abs" style="left:412.5px;top:351px" width="22" height="26" viewBox="0 0 21 26" preserveAspectRatio="none"><path d="M4.5,14.5 V3 a1.6,1.6 0 0 1 3.2,0 V11 V7.5 a1.5,1.5 0 0 1 3,0 V11.5 V8.5 a1.5,1.5 0 0 1 3,0 V12 V9.5 a1.5,1.5 0 0 1 3,0 V17 C16.5,22 14.5,24.5 10.5,24.5 C7.5,24.5 6,23 4,20 L1.3,16.3 a1.4,1.4 0 0 1 2.3,-1.7 Z" fill="#fff" stroke="#141a30" stroke-width="1.3" stroke-linejoin="round"/></svg>
</body></html>
